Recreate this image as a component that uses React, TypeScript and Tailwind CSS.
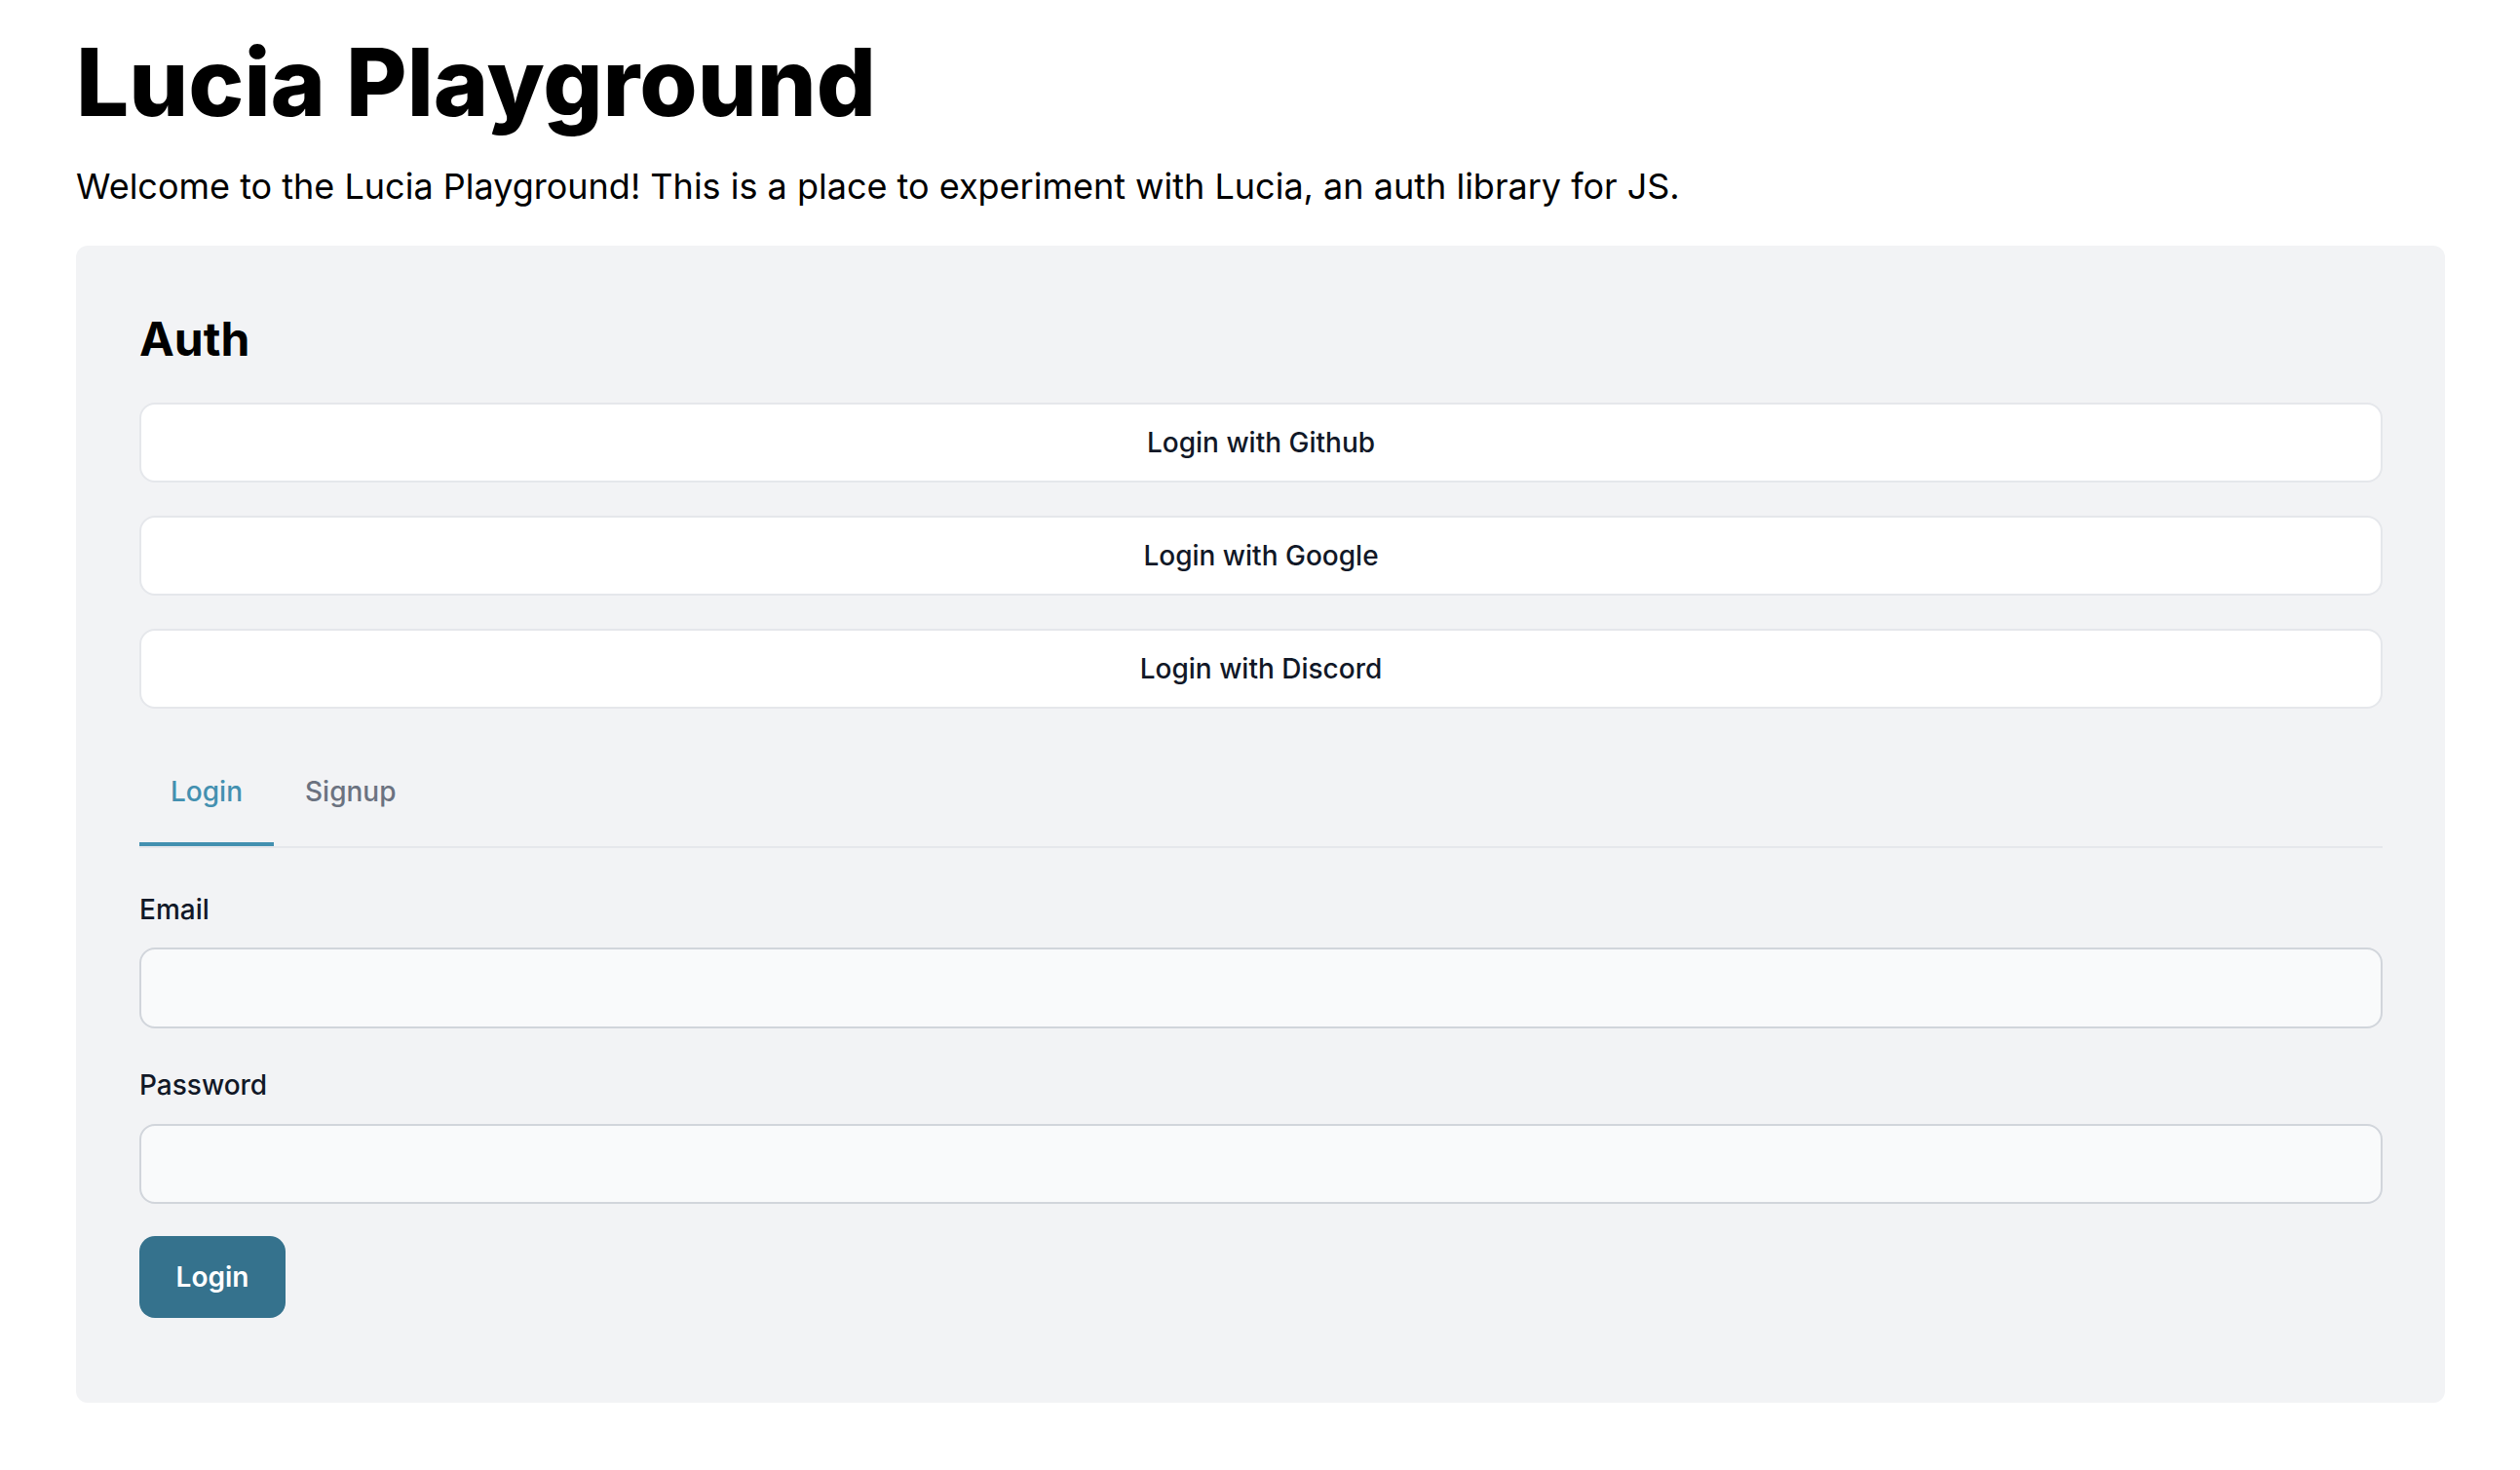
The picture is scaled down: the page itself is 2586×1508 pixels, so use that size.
const providers = ['Github', 'Google', 'Discord'];

export default function App() {
  return (
    <main className="min-h-screen bg-white pl-[78px] pr-[77px] pt-[36px] font-['Inter',_'Noto_Sans',_sans-serif] text-black">
      <h1 className="text-[96px] font-extrabold leading-[96px] tracking-normal">Lucia Playground</h1>
      <p className="mt-[31px] text-[36px] leading-[56px]">
        Welcome to the Lucia Playground! This is a place to experiment with Lucia, an auth library for JS.
      </p>

      <section className="mt-[33px] rounded-[12px] bg-[#f2f3f5] pl-[65px] pr-[64px] pt-[64px] pb-[87px]">
        <h2 className="text-[48px] font-bold leading-[64px]">Auth</h2>

        <div className="mt-[33px] flex flex-col gap-[34px]">
          {providers.map((p) => (
            <button
              key={p}
              className="h-[82px] w-full rounded-[16px] border-2 border-[#e5e7eb] bg-white text-[28px] font-medium text-[#111827]"
            >
              Login with {p}
            </button>
          ))}
        </div>

        <div className="mt-[33px] flex border-b-2 border-[#e5e7eb]">
          <button className="border-b-4 border-[#4390b0] px-[32px] pt-[32px] pb-[32px] text-[28px] leading-[40px] font-medium text-[#4390b0]">
            Login
          </button>
          <button className="border-b-4 border-transparent px-[32px] pt-[32px] pb-[32px] text-[28px] leading-[40px] font-medium text-[#6b7280]">
            Signup
          </button>
        </div>

        <form className="mt-[43px] flex flex-col">
          <label className="text-[28px] leading-[40px] font-medium text-[#111827]">Email</label>
          <input className="mt-[19px] h-[83px] w-full rounded-[16px] border-2 border-[#d1d5db] bg-[#f9fafb] px-[24px] text-[28px] outline-none" />

          <label className="mt-[38px] text-[28px] leading-[40px] font-medium text-[#111827]">Password</label>
          <input
            type="password"
            className="mt-[20px] h-[82px] w-full rounded-[16px] border-2 border-[#d1d5db] bg-[#f9fafb] px-[24px] text-[28px] outline-none"
          />

          <div className="mt-[33px]">
            <button
              type="button"
              className="h-[84px] w-[150px] rounded-[16px] bg-[#35728d] text-[28px] font-semibold text-white"
            >
              Login
            </button>
          </div>
        </form>
      </section>
    </main>
  );
}
